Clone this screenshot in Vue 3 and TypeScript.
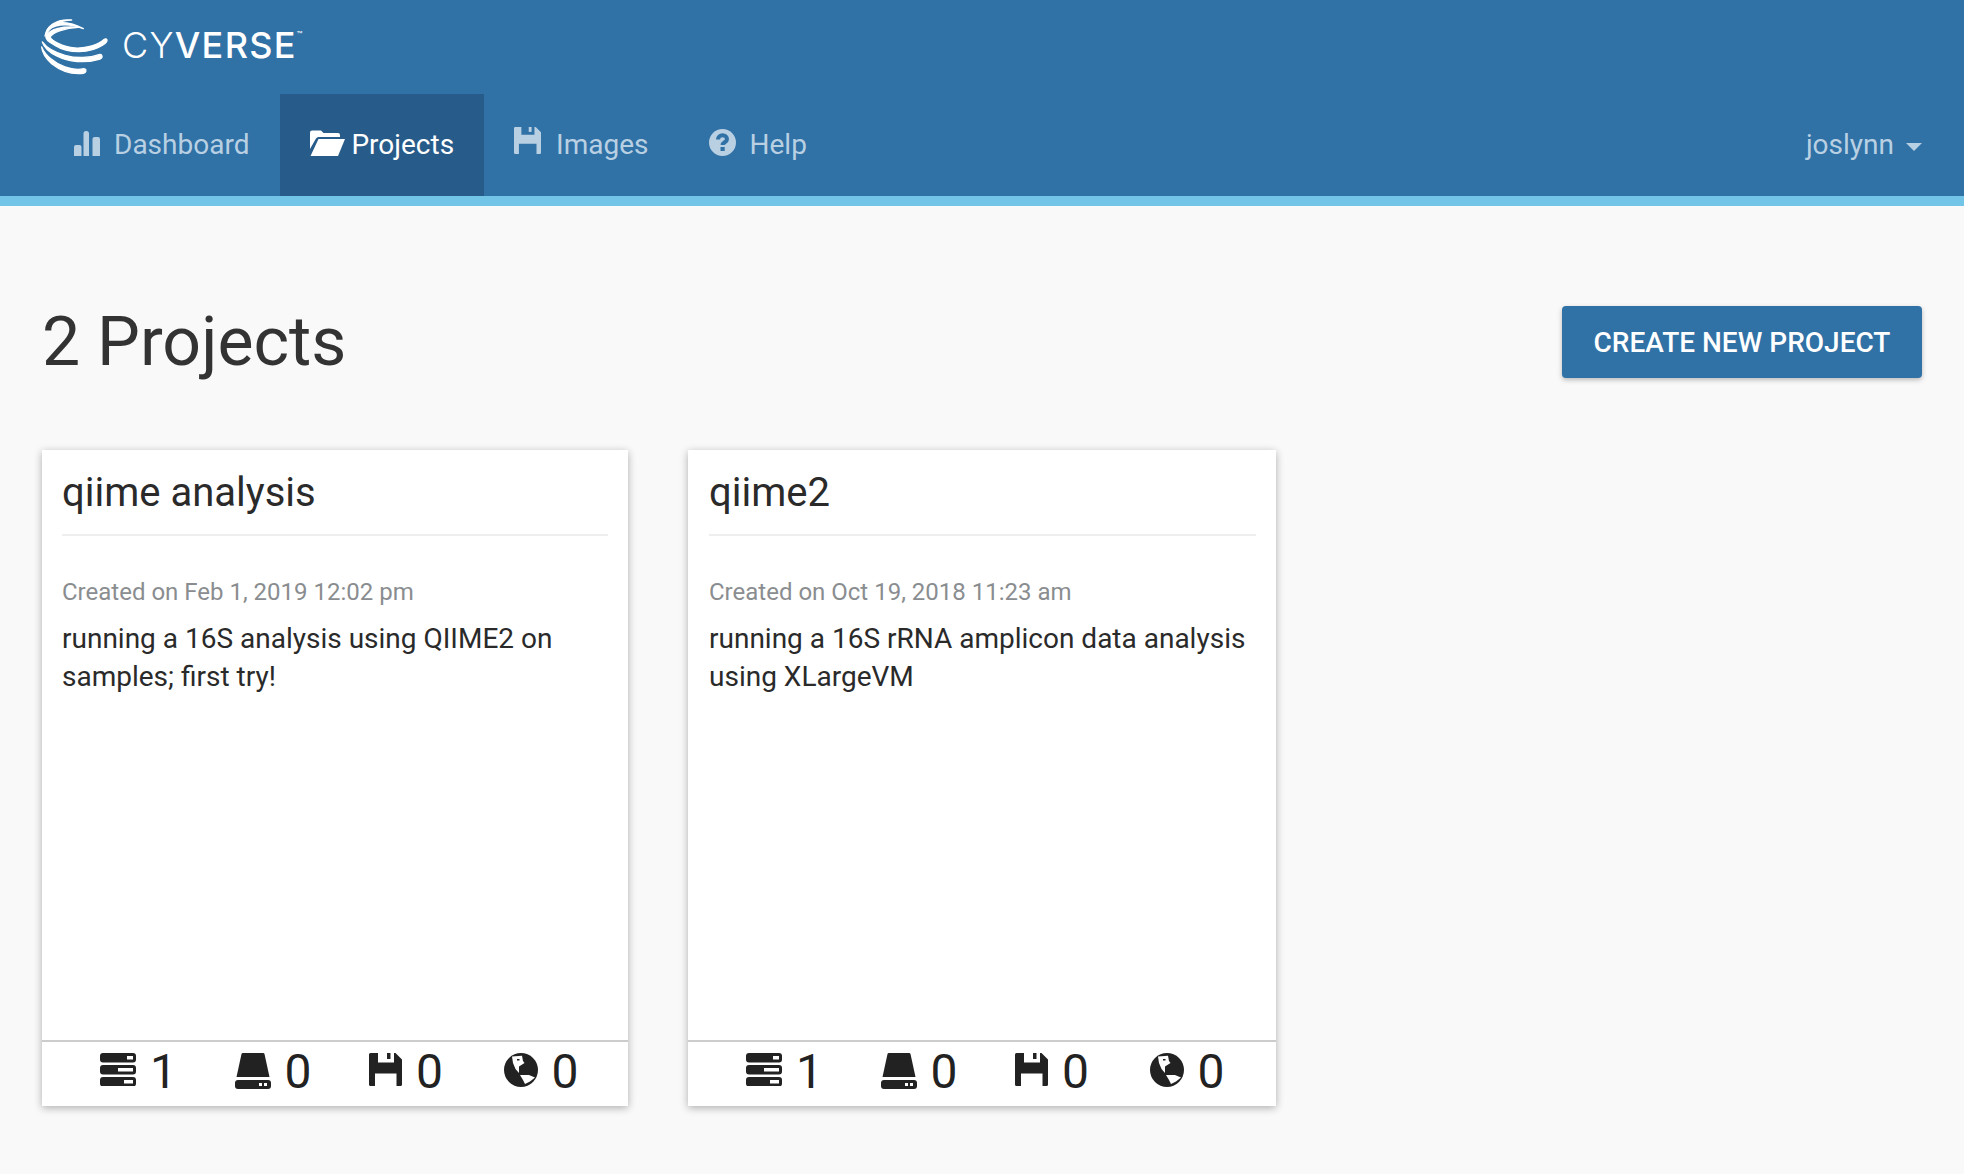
<template>
  <div class="page">
    <svg class="icon-defs" aria-hidden="true">
      <symbol id="i-chart" viewBox="0 0 26 26">
        <path d="M0 17a2 2 0 0 1 2-2h3.500a2 2 0 0 1 2 2v9H0zM9.500 3a2.500 2.500 0 0 1 2.500-2h.5a2.500 2.500 0 0 1 2.500 2v23h-5.500zM18.500 9a2 2 0 0 1 2-2h3.500a2 2 0 0 1 2 2v17h-7.500z" />
      </symbol>
      <symbol id="i-folder" viewBox="0 0 35 26">
        <path d="M0 2.500Q0 .5 2 .5h9l2.500 2.500H28q2 0 2 2V7H8.500q-1.500 0-2.500 1.500L0 19z" />
        <path d="M8.500 9H35l-7 17H.5z" />
      </symbol>
      <symbol id="i-floppy" viewBox="0 0 33 33">
        <path fill-rule="evenodd" d="M1.500 0H9v9.500h16V0h1.500L33 6.500V31.500Q33 33 31.500 33H27.500V20.500H6V33H1.500Q0 33 0 31.500V1.500Q0 0 1.500 0z" />
        <rect x="18" y="0" width="3.500" height="6" />
      </symbol>
      <symbol id="i-help" viewBox="0 0 27 27">
        <circle cx="13.500" cy="13.500" r="13.500" />
        <path class="help-mark" d="M9 10.500C9 7.800 11 6.300 13.500 6.300S18 7.800 18 10.200C18 13.200 13.600 13.300 13.600 16" />
        <rect class="help-dot" x="11.500" y="18" width="4.200" height="4" />
      </symbol>
      <symbol id="i-server" viewBox="0 0 36 33">
        <rect width="36" height="9.500" rx="3" />
        <rect y="12" width="36" height="9.500" rx="3" />
        <rect y="24" width="36" height="9.500" rx="3" />
        <rect class="cut" x="27" y="3" width="6" height="3.500" />
        <rect class="cut" x="18" y="15" width="15" height="3.500" />
        <rect class="cut" x="24" y="27" width="9" height="3.500" />
      </symbol>
      <symbol id="i-drive" viewBox="0 0 36 36">
        <path d="M6.500 1Q6.700 0 8 0H28Q29.300 0 29.500 1L34.500 24H1.500z" />
        <rect y="27" width="36" height="9" rx="3" />
        <rect class="cut" x="24" y="30" width="3" height="3" />
        <rect class="cut" x="29" y="30" width="3" height="3" />
      </symbol>
      <symbol id="i-globe" viewBox="0 0 34 34">
        <circle cx="17" cy="17" r="17" />
        <path class="cut" d="M8 3.500L18 2.800L19 8L20.500 10L15 13.500L15 20L11.500 16L9 10z" />
        <path class="cut" d="M16 22L25 22L31 24.500L26 28.500L21 31L19 27z" />
        <rect x="13" y="6" width="2.500" height="1.500" />
      </symbol>
    </svg>

    <header class="topbar">
      <div class="brand">
        <svg class="logo-mark" viewBox="0 0 240 198">
          <path d="M216 84Q216 92 205 98C165 125 100 125 60 100C40 88 30 82 33 72C45 50 85 42 130 46C90 48 55 60 45 75C50 85 80 105 120 108C155 110 190 98 208 82Q214 78 216 84Z" />
          <path d="M200 130Q204 138 195 141C150 155 100 150 65 132C45 122 28 108 22 90C35 108 60 122 90 130C125 140 165 138 192 128Q198 126 200 130Z" />
          <path d="M152 172Q155 182 145 184C110 188 75 175 50 155C35 142 22 125 20 105C30 130 60 155 90 165C110 172 130 174 146 170Z" />
          <path d="M30 72C35 45 60 20 110 24C70 24 45 45 30 72Z" />
          <path d="M36 55C50 28 95 22 145 50C100 32 65 35 36 55Z" />
        </svg>
        <span class="logo-text"><span class="thin">CY</span>VERSE<sup>™</sup></span>
      </div>
      <nav class="nav">
        <a v-for="item in navItems" :key="item.label" class="nav-item" :class="{ active: item.active }">
          <svg
            class="nav-icon"
            :style="{ width: item.w + 'px', height: item.h + 'px', marginRight: item.gap + 'px', marginBottom: item.lift + 'px' }"
          ><use :href="'#' + item.icon" /></svg>
          {{ item.label }}
        </a>
        <a class="nav-user">joslynn<span class="caret"></span></a>
      </nav>
    </header>

    <main class="content">
      <div class="title-row">
        <h1 class="page-title">2 Projects</h1>
        <button class="create-btn">Create new project</button>
      </div>
      <div class="cards">
        <section v-for="project in projects" :key="project.name" class="card">
          <div class="card-body">
            <h2 class="card-title">{{ project.name }}</h2>
            <div class="created">Created on {{ project.created }}</div>
            <p class="desc">{{ project.description }}</p>
          </div>
          <footer class="card-footer">
            <div v-for="stat in project.stats" :key="stat.icon" class="stat">
              <svg class="stat-icon" :style="{ width: stat.w + 'px', height: stat.h + 'px' }"><use :href="'#' + stat.icon" /></svg>
              <span class="stat-count">{{ stat.count }}</span>
            </div>
          </footer>
        </section>
      </div>
    </main>
  </div>
</template>

<script setup lang="ts">
const navItems = [
  { label: 'Dashboard', icon: 'i-chart', w: 26, h: 26, gap: 14, lift: 3, active: false },
  { label: 'Projects', icon: 'i-folder', w: 35, h: 26, gap: 6, lift: 4, active: true },
  { label: 'Images', icon: 'i-floppy', w: 27, h: 27, gap: 15, lift: 9, active: false },
  { label: 'Help', icon: 'i-help', w: 27, h: 27, gap: 14, lift: 4, active: false }
];

const makeStats = () => [
  { icon: 'i-server', w: 36, h: 33, count: 1 },
  { icon: 'i-drive', w: 36, h: 36, count: 0 },
  { icon: 'i-floppy', w: 33, h: 33, count: 0 },
  { icon: 'i-globe', w: 34, h: 34, count: 0 }
];

const projects = [
  {
    name: 'qiime analysis',
    created: 'Feb 1, 2019 12:02 pm',
    description: 'running a 16S analysis using QIIME2 on samples; first try!',
    stats: makeStats()
  },
  {
    name: 'qiime2',
    created: 'Oct 19, 2018 11:23 am',
    description: 'running a 16S rRNA amplicon data analysis using XLargeVM',
    stats: makeStats()
  }
];
</script>

<style>
html,
body {
  margin: 0;
  background: #f9f9f9;
}
</style>

<style scoped>
.page {
  min-height: 1174px;
  background: #f9f9f9;
  font-family: Roboto, "Liberation Sans", sans-serif;
  color: #333;
}

.icon-defs {
  position: absolute;
  width: 0;
  height: 0;
}

.topbar {
  background: #3071a6;
  border-bottom: 10px solid #72c5e6;
}

.brand {
  display: flex;
  align-items: center;
  height: 94px;
  padding-left: 35px;
}

.logo-mark {
  width: 80px;
  height: 66px;
  margin-bottom: 4px;
  fill: #fff;
  stroke: #fff;
  stroke-width: 4;
  stroke-linejoin: round;
}

.logo-text {
  margin: 0 0 5px 7px;
  font-family: Inter, sans-serif;
  font-size: 36px;
  font-weight: 500;
  letter-spacing: 1.300px;
  color: #fff;
}

.logo-text .thin {
  font-weight: 300;
}

.logo-text sup {
  font-size: 9px;
  vertical-align: 20px;
  line-height: 0;
  letter-spacing: 0;
}

.nav {
  display: flex;
  height: 102px;
  padding: 0 42px 0 44px;
}

.nav-item {
  display: flex;
  align-items: center;
  padding: 0 30px 1px;
  font-size: 28px;
  color: #b9d0e3;
}

.nav-item:first-child {
  padding-right: 31px;
}

.nav-item.active {
  background: #275b8a;
  color: #fff;
}

.nav-icon {
  fill: currentColor;
}

.help-mark {
  fill: none;
  stroke: #3071a6;
  stroke-width: 4;
}

.help-dot {
  fill: #3071a6;
}

.nav-user {
  display: flex;
  align-items: center;
  margin-left: auto;
  padding-bottom: 1px;
  font-size: 28px;
  color: #b9d0e3;
}

.caret {
  margin-left: 12px;
  margin-top: 4px;
  border-top: 8px solid #b9d0e3;
  border-left: 8px solid transparent;
  border-right: 8px solid transparent;
}

.content {
  padding: 100px 42px 0;
}

.title-row {
  display: flex;
  align-items: center;
  justify-content: space-between;
  height: 72px;
}

.page-title {
  margin: 0;
  font-size: 68px;
  font-weight: 400;
  color: #333;
}

.create-btn {
  width: 360px;
  height: 72px;
  border: 0;
  border-radius: 4px;
  background: #3071a6;
  color: #fff;
  font-family: inherit;
  font-size: 28px;
  font-weight: 500;
  text-transform: uppercase;
  box-shadow: 0 2px 5px rgba(0, 0, 0, 0.26);
}

.cards {
  display: flex;
  gap: 60px;
  margin-top: 72px;
}

.card {
  display: flex;
  flex-direction: column;
  width: 586px;
  height: 656px;
  background: #fff;
  box-shadow: 0 2px 8px rgba(0, 0, 0, 0.3);
}

.card:last-child {
  width: 588px;
}

.card-body {
  flex: 1;
  padding: 0 20px 0 21px;
}

.card:first-child .card-body {
  padding-left: 20px;
}

.card-title {
  margin: 0;
  height: 84px;
  line-height: 86px;
  border-bottom: 2px solid #eee;
  font-size: 40px;
  font-weight: 400;
  color: #2a2a2a;
}

.created {
  margin-top: 38px;
  line-height: 36px;
  font-size: 24px;
  color: #8a8d90;
}

.desc {
  margin: 10px 0 0;
  font-size: 28px;
  line-height: 37.500px;
  color: #2a2a2a;
}

.card-footer {
  display: grid;
  grid-template-columns: repeat(3, 134.500px) 1fr;
  height: 66px;
  box-sizing: border-box;
  padding: 11px 0 0 58px;
  border-top: 2px solid #ccc;
}

.stat {
  display: flex;
  align-items: flex-start;
  gap: 14px;
}

.stat-icon {
  fill: #222;
}

.stat-count {
  margin-top: 2px;
  font-size: 48px;
  line-height: 34px;
  color: #222;
}

.cut {
  fill: #fff;
}
</style>
